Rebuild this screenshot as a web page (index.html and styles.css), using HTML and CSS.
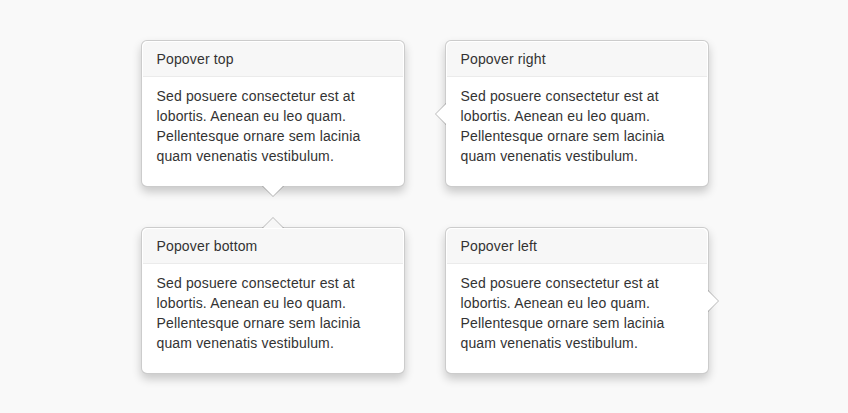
FILE: index.html
```html
<!DOCTYPE html>
<html>
<head>
<meta charset="utf-8">
<link rel="stylesheet" href="styles.css">
</head>
<body>
<div class="grid">
  <div class="popover top">
    <div class="arrow"></div>
    <h3 class="popover-title">Popover top</h3>
    <div class="popover-content"><p>Sed posuere consectetur est at lobortis. Aenean eu leo quam. Pellentesque ornare sem lacinia quam venenatis vestibulum.</p></div>
  </div>
  <div class="popover right">
    <div class="arrow"></div>
    <h3 class="popover-title">Popover right</h3>
    <div class="popover-content"><p>Sed posuere consectetur est at lobortis. Aenean eu leo quam. Pellentesque ornare sem lacinia quam venenatis vestibulum.</p></div>
  </div>
  <div class="popover bottom">
    <div class="arrow"></div>
    <h3 class="popover-title">Popover bottom</h3>
    <div class="popover-content"><p>Sed posuere consectetur est at lobortis. Aenean eu leo quam. Pellentesque ornare sem lacinia quam venenatis vestibulum.</p></div>
  </div>
  <div class="popover left">
    <div class="arrow"></div>
    <h3 class="popover-title">Popover left</h3>
    <div class="popover-content"><p>Sed posuere consectetur est at lobortis. Aenean eu leo quam. Pellentesque ornare sem lacinia quam venenatis vestibulum.</p></div>
  </div>
</div>
</body>
</html>
```
FILE: styles.css
```css
html, body {
  margin: 0;
  padding: 0;
}
body {
  background: #f9f9f9;
  font-family: "Liberation Sans", Arial, sans-serif;
  font-size: 14px;
  line-height: 20px;
  letter-spacing: 0.15px;
  color: #333;
  width: 848px;
  height: 413px;
  overflow: hidden;
}
.grid {
  display: grid;
  grid-template-columns: 264px 264px;
  column-gap: 40px;
  row-gap: 40px;
  justify-content: center;
  padding-top: 40px;
  padding-left: 1px;
}
.popover {
  position: relative;
  box-sizing: border-box;
  width: 264px;
  padding: 1px;
  background: #fff;
  border: 1px solid rgba(0,0,0,0.2);
  border-radius: 6px;
  box-shadow: 0 5px 10px rgba(0,0,0,0.2);
}
.popover-title {
  margin: 0;
  padding: 8px 14px;
  font-size: 14px;
  font-weight: normal;
  line-height: 18px;
  background: #f7f7f7;
  border-bottom: 1px solid #ebebeb;
  border-radius: 5px 5px 0 0;
}
.popover-content {
  padding: 9px 14px;
}
.popover-content p {
  margin: 0 0 10px;
}
.arrow, .arrow::after {
  position: absolute;
  width: 0;
  height: 0;
  border: solid transparent;
}
.arrow { border-width: 11px; }
.arrow::after { content: ""; border-width: 10px; }

.top .arrow {
  bottom: -11px;
  left: 50%;
  margin-left: -11px;
  border-bottom-width: 0;
  border-top-color: rgba(0,0,0,0.25);
}
.top .arrow::after {
  bottom: 1px;
  margin-left: -10px;
  border-bottom-width: 0;
  border-top-color: #fff;
}
.right .arrow {
  top: 50%;
  left: -11px;
  margin-top: -11px;
  border-left-width: 0;
  border-right-color: rgba(0,0,0,0.25);
}
.right .arrow::after {
  left: 1px;
  bottom: -10px;
  border-left-width: 0;
  border-right-color: #fff;
}
.bottom .arrow {
  top: -11px;
  left: 50%;
  margin-left: -11px;
  border-top-width: 0;
  border-bottom-color: rgba(0,0,0,0.25);
}
.bottom .arrow::after {
  top: 1px;
  margin-left: -10px;
  border-top-width: 0;
  border-bottom-color: #f7f7f7;
}
.left .arrow {
  top: 50%;
  right: -11px;
  margin-top: -11px;
  border-right-width: 0;
  border-left-color: rgba(0,0,0,0.25);
}
.left .arrow::after {
  right: 1px;
  bottom: -10px;
  border-right-width: 0;
  border-left-color: #fff;
}
```
